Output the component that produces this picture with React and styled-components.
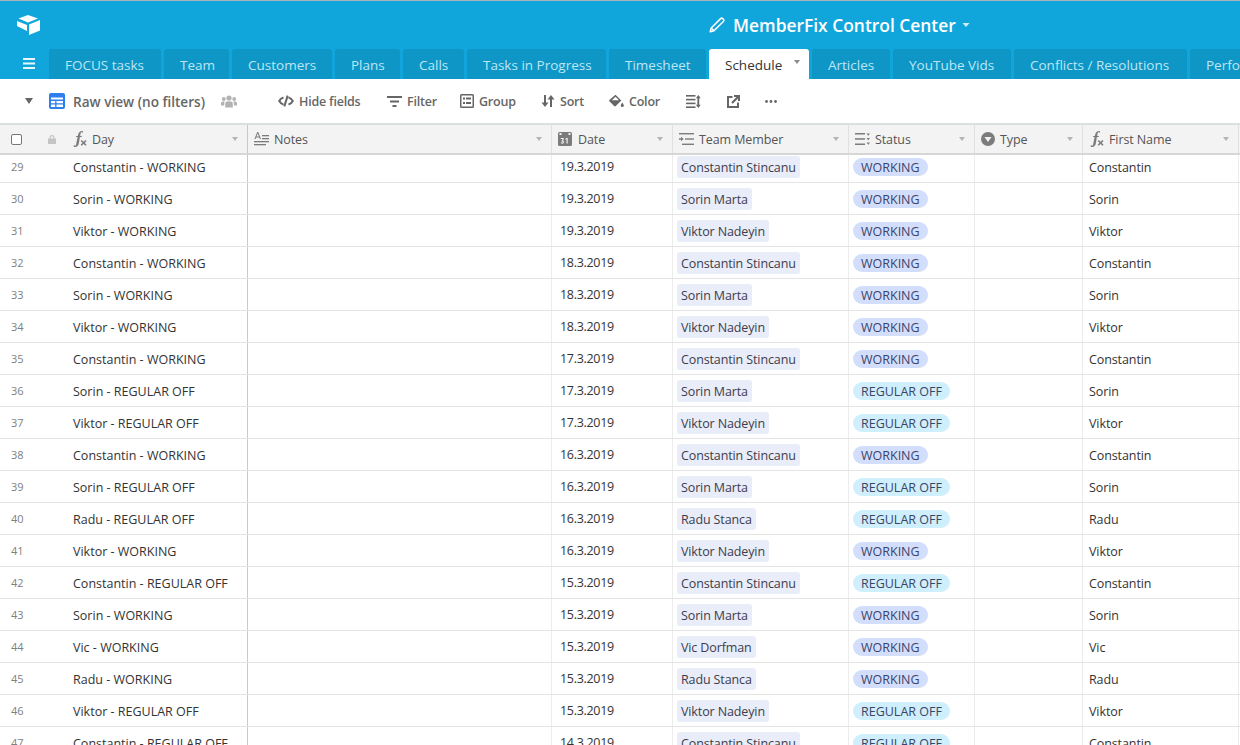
import React from "react";
import styled, { createGlobalStyle } from "styled-components";

const Global = createGlobalStyle`
  html, body { margin: 0; padding: 0; height: 100%; overflow: hidden; background: #fff; }
  body { font-family: "Open Sans", "Noto Sans", "Liberation Sans", sans-serif; font-size: 12.5px; color: #333; }
  * { box-sizing: border-box; }
`;

const Page = styled.div`width: 1240px; height: 745px; overflow: hidden; display: flex; flex-direction: column;`;
const Header = styled.header`
  height: 49px; flex: none; background: #10a6dc; border-top: 1px solid #a9b4ba;
  display: flex; align-items: center; padding: 0 17px; color: #fff;
`;
const Title = styled.div`
  margin-left: 669px; display: flex; align-items: center; font-size: 17.4px; font-weight: 600; white-space: nowrap;
  svg:first-child { margin-right: 8px; }
  svg:last-child { margin-left: 6px; }
`;
const TabBar = styled.nav`
  height: 30px; flex: none; background: #10a6dc; display: flex; align-items: flex-end; overflow: hidden;
`;
const Menu = styled.div`width: 49px; height: 100%; flex: none; display: flex; align-items: center; padding: 0 0 1px 23px;`;
const Tab = styled.div`
  flex: none; width: ${p => p.$w}px; height: 30px; margin-right: 3px; padding: 2px 0 0 16px;
  display: flex; align-items: center; position: relative; white-space: nowrap; overflow: hidden;
  border-radius: 3px 3px 0 0; font-size: 13.5px;
  background: ${p => p.$active ? "#fff" : "#0e96c6"};
  color: ${p => p.$active ? "#333" : "#bde6f5"};
`;
const TabCaret = styled.span`
  position: absolute; right: 9px; top: 11px; width: 0; height: 0;
  border-left: 3.5px solid transparent; border-right: 3.5px solid transparent; border-top: 4.5px solid #8c8c8c;
`;
const Toolbar = styled.div`
  height: 44px; flex: none; display: flex; align-items: center; padding-left: 25px; background: #fff; color: #555; font-size: 12.5px;
`;
const ViewCaret = styled.span`
  width: 0; height: 0; margin-right: 15px; border-left: 4.5px solid transparent; border-right: 4.5px solid transparent; border-top: 6px solid #666;
`;
const ViewName = styled.span`margin: 0 16px 0 8px; font-weight: 600; color: #666; font-size: 13.6px; white-space: nowrap;`;
const Tools = styled.div`display: flex; align-items: center; gap: 25px; margin-left: 41px;`;
const Tool = styled.div`
  display: flex; align-items: center; gap: 5px; font-weight: 600; color: #666; white-space: nowrap; letter-spacing: -0.2px;
  ${p => p.$w ? `width: ${p.$w}px;` : ""}
`;

const Grid = styled.div`flex: 1; min-height: 0; overflow: hidden; display: flex; flex-direction: column;`;
const cols = "248px 304px 121px 176px 126px 108px 156px";
const HeadRow = styled.div`
  flex: none; height: 32px; display: grid; grid-template-columns: ${cols}; background: #f3f3f3;
  border-top: 2px solid #dcdfdf; border-bottom: 2px solid #d6d6d6; position: relative; z-index: 1;
`;
const HeadCell = styled.div`
  display: flex; align-items: center; gap: 5px; padding: 0 9px 0 6px; color: #555; font-size: 12.5px; position: relative;
  border-right: 1px solid ${p => p.$strong ? "#c9c9c9" : "#e0e0e0"};
`;
const PrimaryHead = styled(HeadCell)`padding-left: 11px;`;
const Check = styled.span`width: 11px; height: 11px; border: 1px solid #777; border-radius: 2px; background: #fff; margin-right: 21px; flex: none;`;
const Label = styled.span`flex: 1; white-space: nowrap; letter-spacing: -0.1px;`;
const HeadCaret = styled.span`
  flex: none; width: 0; height: 0; border-left: 3.5px solid transparent; border-right: 3.5px solid transparent; border-top: 4.5px solid #b4b4b4;
`;
const Rows = styled.div`margin-top: -4px;`;
const Row = styled.div`display: grid; grid-template-columns: ${cols}; height: 32px; border-bottom: 1px solid #e4e4e4;`;
const Cell = styled.div`
  display: flex; align-items: center; padding: 1px 6px 0; white-space: nowrap; overflow: hidden;
  border-right: 1px solid ${p => p.$strong ? "#c9c9c9" : "#ececec"};
`;
const Primary = styled(Cell)`padding-left: 11px;`;
const Num = styled.span`width: 62px; flex: none; font-size: 11px; color: #808080; margin-top: -1px;`;
const DateText = styled.span`margin: -2px 0 0 2px; letter-spacing: -0.3px;`;
const Linked = styled.span`
  height: 22px; display: inline-flex; align-items: center; padding: 2px 4px 0; margin: -1px 0 0 -2px; background: #e9ecf9; border-radius: 3px; color: #3d3d4a; letter-spacing: -0.12px;
`;
const Pill = styled.span`
  height: 18px; display: inline-flex; align-items: center; padding: 2px 8px 0; margin: -1px 0 0 -2px; border-radius: 9px; color: #3a4468;
  background: ${p => p.$off ? "#cfeffd" : "#d3defd"};
`;
const FirstName = styled.span`letter-spacing: -0.1px;`;

const G = "#666";
const Logo = () => (
  <svg width="23" height="20" viewBox="0 0 23 20" fill="#fff">
    <path d="M11 0 21 3.500 11 7.500 1.500 3.500Z" />
    <path d="M12 9.500 23 5V15.500L12 20Z" />
    <path d="M0 6 10 10V16L0 11Z" />
  </svg>
);
const Pencil = () => (
  <svg width="16" height="16" viewBox="0 0 16 16" fill="none" stroke="#fff" strokeWidth="1.500">
    <path d="M1.200 14.800 2.200 11 11.600 1.600a1.500 1.500 0 0 1 2.100 0l.7.7a1.500 1.500 0 0 1 0 2.100L5 13.800Z" strokeLinejoin="round" />
    <path d="M2.200 11 5 13.800" />
  </svg>
);
const TitleCaret = () => (
  <svg width="8" height="6" viewBox="0 0 8 6" fill="#cdeefa"><path d="M0.500 1H7.500L4 5Z" /></svg>
);
const Burger = () => (
  <svg width="12" height="11" viewBox="0 0 12 11" fill="#e8f7fd"><rect width="12" height="2" y="0" /><rect width="12" height="2" y="4.500" /><rect width="12" height="2" y="9" /></svg>
);
const TableIcon = () => (
  <svg width="16" height="16" viewBox="0 0 16 16" style={{ flex: "none", marginLeft: 1 }}>
    <rect width="16" height="16" rx="2" fill="#2d7ff0" />
    <path d="M2 4.500H14V6.500H2ZM2 8H6.200V10.200H2ZM7.500 8H14V10.200H7.500ZM2 11.500H6.200V14H2ZM7.500 11.500H14V14H7.500Z" fill="#fff" />
  </svg>
);
const People = () => (
  <svg width="16" height="13" viewBox="0 0 16 13" fill="#b3b3b3" style={{ flex: "none" }}>
    <circle cx="8" cy="3" r="2.600" /><circle cx="2.800" cy="4" r="1.900" /><circle cx="13.200" cy="4" r="1.900" />
    <path d="M4.200 12.500V8.600C4.200 7 5.500 6.200 8 6.200s3.800.8 3.800 2.400v3.900ZM0 10.500V8C0 6.900.8 6.400 2.800 6.400c.4 0 .6 0 .9.1-.3.5-.5 1.200-.5 2v2ZM16 10.500V8c0-1.100-.8-1.600-2.800-1.600-.4 0-.6 0-.9.1.3.5.5 1.200.5 2v2Z" />
  </svg>
);
const HideIcon = () => (
  <svg width="16" height="12" viewBox="0 0 16 12" fill="none" stroke={G} strokeWidth="2" strokeLinejoin="round" style={{ flex: "none" }}>
    <path d="M5.500 2.500C3.600 3 2 4.400 1.200 6c1.200 2 2.800 3.100 4.300 3.600" />
    <path d="M10.500 9.500C12.400 9 14 7.600 14.800 6c-1.200-2-2.800-3.100-4.300-3.600" />
    <path d="M9.700 0.600 6.300 11.400" />
  </svg>
);
const FilterIcon = () => (
  <svg width="15" height="11" viewBox="0 0 15 11" fill={G} style={{ flex: "none" }}><rect width="15" height="2" /><rect x="3" y="4.500" width="9" height="2" /><rect x="5.500" y="9" width="4" height="2" /></svg>
);
const GroupIcon = () => (
  <svg width="14" height="14" viewBox="0 0 14 14" fill={G} style={{ flex: "none" }}>
    <path fillRule="evenodd" d="M1.500 0h11A1.500 1.500 0 0 1 14 1.500v11a1.500 1.500 0 0 1-1.500 1.500h-11A1.500 1.500 0 0 1 0 12.500v-11A1.500 1.500 0 0 1 1.500 0ZM1.500 1.500v11h11v-11ZM3 3.500H5V5.500H3ZM6 3.500H11V5.500H6ZM3 8H5V10H3ZM6 8H11V10H6Z" />
  </svg>
);
const SortIcon = () => (
  <svg width="14" height="12" viewBox="0 0 14 12" fill={G} style={{ flex: "none" }}>
    <path d="M3 0H5V7.500H7.500L4 12 .5 7.500H3ZM9 12H11V4.500H13.500L10 0 6.500 4.500H9Z" />
  </svg>
);
const ColorIcon = () => (
  <svg width="15" height="14" viewBox="0 0 15 14" style={{ flex: "none" }}>
    <path d="M6.500 0.800 12.300 6.500 6.800 12a1.200 1.200 0 0 1-1.700 0L.6 7.500a1.200 1.200 0 0 1 0-1.700Z" fill={G} />
    <path d="M6.500 2.700 10 6.200H2.900Z" fill="#fff" />
    <path d="M13.300 8.500c.9 1.300 1.500 2.200 1.500 3a1.500 1.500 0 0 1-3 0c0-.8.6-1.700 1.500-3Z" fill={G} />
  </svg>
);
const HeightIcon = () => (
  <svg width="15" height="13" viewBox="0 0 15 13" fill={G}>
    <rect width="9.500" height="1.600" y="0" /><rect width="9.500" height="1.600" y="3.800" /><rect width="9.500" height="1.600" y="7.600" /><rect width="9.500" height="1.600" y="11.400" />
    <path d="M12.300 0 14.700 3.200H13.200V9.800H14.700L12.300 13 9.900 9.800H11.400V3.200H9.900Z" />
  </svg>
);
const ShareIcon = () => (
  <svg width="13" height="13" viewBox="0 0 13 13" fill="none" stroke={G} strokeWidth="2">
    <path d="M5.500 2H1V12H11V7.500" /><path d="M5 8 11.500 1.500" strokeWidth="2.200" /><path d="M7 1H12V6" />
  </svg>
);
const More = () => (
  <svg width="12" height="3" viewBox="0 0 12 3" fill={G}><circle cx="1.500" cy="1.500" r="1.400" /><circle cx="6" cy="1.500" r="1.400" /><circle cx="10.500" cy="1.500" r="1.400" /></svg>
);
const HG = "#7c7c7c";
const LockIcon = () => (
  <svg width="8" height="9" viewBox="0 0 8 9" fill="#c4c4c4" style={{ flex: "none", marginRight: 11 }}>
    <path d="M1.500 3.600V2.500a2.500 2.500 0 0 1 5 0v1.100H8V9H0V3.600ZM2.700 3.600H5.300V2.500a1.300 1.300 0 0 0-2.600 0Z" />
  </svg>
);
const Fx = () => (
  <svg width="15" height="16" viewBox="0 0 15 16" style={{ flex: "none" }}>
    <path d="M3.300 16c-1 0-1.800-.3-1.800-1 0-.5.400-.8.800-.8.500 0 .7.300.9.600.4 0 .7-.4.900-1.200L5.600 6H4l.2-1H5.800C6.200 2.500 7.500 0 9.600 0c.9 0 1.500.4 1.500 1 0 .4-.3.800-.8.800-.4 0-.7-.3-.8-.7-.6.100-1 1.200-1.300 3.900h1.700l-.2 1H7.900L6.800 12.500C6.400 14.800 5.200 16 3.300 16Z" fill={HG} />
    <path d="M9.200 9.500 14 14.300M14 9.500 9.200 14.300" stroke={HG} strokeWidth="1.600" />
  </svg>
);
const NotesIcon = () => (
  <svg width="15" height="14" viewBox="0 0 15 14" style={{ flex: "none" }} fill={HG}>
    <path d="M3.200 0H4.300L7 7H5.900L5.300 5.400H2.200L1.600 7H.5ZM2.600 4.500H4.900L3.750 1.300Z" />
    <rect x="8" y="3" width="7" height="1.300" /><rect x="8" y="6" width="7" height="1.300" /><rect y="9" width="15" height="1.300" /><rect y="12" width="12" height="1.300" />
  </svg>
);
const DateIcon = () => (
  <svg width="14" height="14" viewBox="0 0 14 14" style={{ flex: "none", marginRight: 1 }}>
    <rect width="14" height="14" rx="1.500" fill={HG} />
    <rect x="1.500" y="1" width="2" height="2" fill="#f3f3f3" /><rect x="10.500" y="1" width="2" height="2" fill="#f3f3f3" />
    <path d="M2.800 6h3v1.200L4.600 8.500c.9 0 1.400.6 1.400 1.500 0 1.100-.8 1.700-1.700 1.700-.7 0-1.200-.2-1.600-.6l.5-.8c.3.300.6.400 1 .4s.7-.2.700-.6-.3-.6-.8-.6h-.4V8.600L4.700 7H2.800ZM8.500 6H9.700V11.600H8.500V7.200L7.400 7.700V6.700Z" fill="#f3f3f3" />
  </svg>
);
const MemberIcon = () => (
  <svg width="15" height="12" viewBox="0 0 15 12" style={{ flex: "none" }} fill={HG}>
    <rect x="0" y="0" width="15" height="1.400" /><rect x="6" y="5.300" width="9" height="1.400" /><rect x="3" y="10.600" width="12" height="1.400" />
    <path d="M0 5.300H2V3.700L4.700 6 2 8.300V6.700H0Z" />
  </svg>
);
const StatusIcon = () => (
  <svg width="15" height="12" viewBox="0 0 15 12" style={{ flex: "none" }} fill={HG}>
    <rect y="0" width="10" height="1.500" /><rect y="5.200" width="10" height="1.500" /><rect y="10.500" width="10" height="1.500" />
    <path d="M11.500 0.500H15L13.250 2.700ZM11.500 5H15L13.250 7.200ZM11.500 9.500H15L13.250 11.700Z" />
  </svg>
);
const TypeIcon = () => (
  <svg width="14" height="14" viewBox="0 0 14 14" style={{ flex: "none" }}>
    <circle cx="7" cy="7" r="7" fill={HG} /><path d="M3.500 5H10.500L7 10Z" fill="#f3f3f3" />
  </svg>
);

const tabs = [
  ["FOCUS tasks", 112], ["Team", 65], ["Customers", 100], ["Plans", 65], ["Calls", 61],
  ["Tasks in Progress", 139], ["Timesheet", 97], ["Schedule", 100, true], ["Articles", 78],
  ["YouTube Vids", 118], ["Conflicts / Resolutions", 173], ["Performance", 120],
];
const tools = [
  [HideIcon, "Hide fields", 84], [FilterIcon, "Filter", 48], [GroupIcon, "Group", 56], [SortIcon, "Sort", 43],
  [ColorIcon, "Color", 52], [HeightIcon, "", 16], [ShareIcon, "", 13], [More, "", 12],
];
const members = {
  Constantin: "Constantin Stincanu", Sorin: "Sorin Marta", Viktor: "Viktor Nadeyin",
  Radu: "Radu Stanca", Vic: "Vic Dorfman",
};
const W = "WORKING", O = "REGULAR OFF";
const data = [
  ["Constantin", W, "19.3.2019"], ["Sorin", W, "19.3.2019"], ["Viktor", W, "19.3.2019"],
  ["Constantin", W, "18.3.2019"], ["Sorin", W, "18.3.2019"], ["Viktor", W, "18.3.2019"],
  ["Constantin", W, "17.3.2019"], ["Sorin", O, "17.3.2019"], ["Viktor", O, "17.3.2019"],
  ["Constantin", W, "16.3.2019"], ["Sorin", O, "16.3.2019"], ["Radu", O, "16.3.2019"],
  ["Viktor", W, "16.3.2019"], ["Constantin", O, "15.3.2019"], ["Sorin", W, "15.3.2019"],
  ["Vic", W, "15.3.2019"], ["Radu", W, "15.3.2019"], ["Viktor", O, "15.3.2019"],
  ["Constantin", O, "14.3.2019"],
];
const heads = [
  [NotesIcon, "Notes"], [DateIcon, "Date"], [MemberIcon, "Team Member"],
  [StatusIcon, "Status"], [TypeIcon, "Type"], [Fx, "First Name"],
];

export default function App() {
  return (
    <Page>
      <Global />
      <Header>
        <Logo />
        <Title>
          <Pencil />
          MemberFix Control Center
          <TitleCaret />
        </Title>
      </Header>
      <TabBar>
        <Menu><Burger /></Menu>
        {tabs.map(([name, w, active]) => (
          <Tab key={name} $w={w} $active={active}>
            {name}
            {active && <TabCaret />}
          </Tab>
        ))}
      </TabBar>
      <Toolbar>
        <ViewCaret />
        <TableIcon />
        <ViewName>Raw view (no filters)</ViewName>
        <People />
        <Tools>
          {tools.map(([Icon, label, w], i) => (
            <Tool key={i} $w={w}><Icon />{label}</Tool>
          ))}
        </Tools>
      </Toolbar>
      <Grid>
        <HeadRow>
          <PrimaryHead $strong>
            <Check /><LockIcon /><Fx /><Label>Day</Label><HeadCaret />
          </PrimaryHead>
          {heads.map(([Icon, label]) => (
            <HeadCell key={label}><Icon /><Label>{label}</Label><HeadCaret /></HeadCell>
          ))}
        </HeadRow>
        <Rows>
          {data.map(([name, status, date], i) => (
            <Row key={i}>
              <Primary $strong><Num>{29 + i}</Num>{name} - {status}</Primary>
              <Cell />
              <Cell><DateText>{date}</DateText></Cell>
              <Cell><Linked>{members[name]}</Linked></Cell>
              <Cell><Pill $off={status === O}>{status}</Pill></Cell>
              <Cell />
              <Cell><FirstName>{name}</FirstName></Cell>
            </Row>
          ))}
        </Rows>
      </Grid>
    </Page>
  );
}
